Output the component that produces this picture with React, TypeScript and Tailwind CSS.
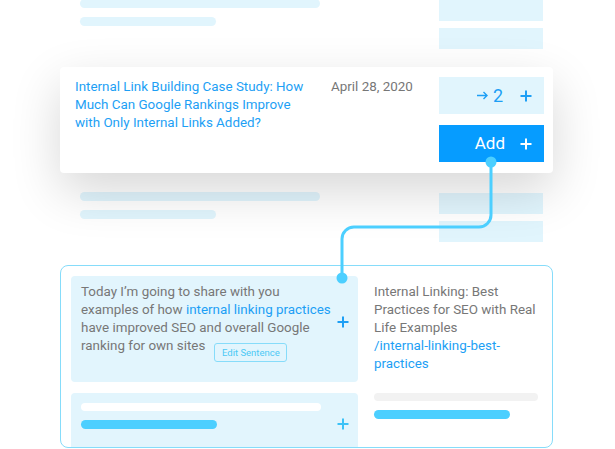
import React from "react";

const Plus = ({ className = "", color = "currentColor" }: { className?: string; color?: string }) => (
  <svg viewBox="0 0 12 12" className={className} fill="none">
    <path d="M6 0.5V11.5M0.5 6H11.5" stroke={color} strokeWidth="2" />
  </svg>
);

const GhostRow = ({ className = "" }: { className?: string }) => (
  <div className={`flex ${className}`}>
    <div className="ml-[80px] flex flex-col">
      <div className="h-[9px] w-[240px] rounded-full bg-[#e1f5fd]" />
      <div className="mt-[9px] h-[9px] w-[136px] rounded-full bg-[#e1f5fd]" />
    </div>
    <div className="ml-[119px] flex flex-col pt-[1px]">
      <div className="h-[21px] w-[104px] bg-[#e1f5fd]" />
      <div className="mt-[7px] h-[21px] w-[104px] bg-[#e1f5fd]" />
    </div>
  </div>
);

export default function App() {
  return (
    <div
      className="relative h-[449px] w-[615px] overflow-hidden bg-white"
      style={{ fontFamily: "Roboto, 'Liberation Sans', sans-serif" }}
    >
      <GhostRow className="h-[50px] -mt-[1px]" />

      {/* Card */}
      <div className="relative z-10 ml-[60px] mt-[18px] flex h-[106px] w-[493px] rounded-[4px] bg-white shadow-[0_18px_50px_rgba(0,0,0,0.16)]">
        <div className="w-[271px] pl-[15px] pt-[11px] text-[13.4px] leading-[18px] text-[#1d9ff5]">
          <div className="whitespace-nowrap">Internal Link Building Case Study: How</div>
          <div className="whitespace-nowrap">Much Can Google Rankings Improve</div>
          <div className="whitespace-nowrap">with Only Internal Links Added?</div>
        </div>
        <div className="w-[108px] pt-[11px] text-[13.4px] leading-[18px] text-[#777777] whitespace-nowrap">
          April 28, 2020
        </div>
        <div className="flex w-[105px] flex-col pt-[10px]">
          <div className="flex h-[37px] items-center justify-end bg-[#e1f5fd] pr-[12px] text-[#1d9ff5]">
            <svg viewBox="0 0 11 9" className="h-[9px] w-[11px]" fill="none">
              <path d="M0 4.5H10M6.5 1L10 4.5L6.5 8" stroke="#1d9ff5" strokeWidth="1.4" />
            </svg>
            <span className="ml-[5px] text-[18px] leading-none">2</span>
            <Plus className="ml-[17px] h-[12px] w-[12px]" color="#1d9ff5" />
          </div>
          <div className="mt-[11px] flex h-[37px] items-center justify-end bg-[#069cff] pr-[12px] text-white">
            <span className="text-[17px] leading-none">Add</span>
            <Plus className="ml-[15px] h-[12px] w-[12px]" color="#ffffff" />
          </div>
        </div>
      </div>

      <GhostRow className="mt-[19px]" />

      {/* Bottom container */}
      <div className="ml-[60px] mt-[23px] h-[183px] w-[493px] overflow-hidden rounded-[8px] border-[1.5px] border-[#86dcfa] bg-white">
        <div className="flex pl-[10px] pt-[10px]">
          <div className="flex w-[287px] flex-col">
            <div className="flex h-[106px] rounded-[4px] bg-[#e2f5fd] pl-[10px] pt-[7px]">
              <div className="w-[256px] text-[13.4px] leading-[18px] text-[#777777]">
                <div className="whitespace-nowrap">Today I’m going to share with you</div>
                <div className="whitespace-nowrap">
                  examples of how <span className="text-[#1d9ff5]">internal linking practices</span>
                </div>
                <div className="whitespace-nowrap">have improved SEO and overall Google</div>
                <div className="whitespace-nowrap">
                  ranking for own sites
                  <span className="ml-[9px] inline-flex h-[19px] w-[73px] items-center justify-center rounded-[3px] border border-[#86dcfa] align-[-6px] text-[9.5px] leading-none text-[#4cc9f5]">
                    Edit Sentence
                  </span>
                </div>
              </div>
              <Plus className="mt-[33px] h-[12px] w-[12px]" color="#1d9ff5" />
            </div>
            <div className="mt-[11px] flex h-[80px] rounded-[4px] bg-[#e2f5fd] pl-[10px] pt-[10px]">
              <div className="flex w-[256px] flex-col">
                <div className="h-[8px] w-[240px] rounded-full bg-white" />
                <div className="mt-[9px] h-[9px] w-[136px] rounded-full bg-[#4ccfff]" />
              </div>
              <Plus className="mt-[15px] h-[12px] w-[12px]" color="#3cc2f7" />
            </div>
          </div>
          <div className="ml-[16px] flex flex-col">
            <div className="pt-[7px] text-[13.4px] leading-[18px] text-[#777777]">
              <div className="whitespace-nowrap">Internal Linking: Best</div>
              <div className="whitespace-nowrap">Practices for SEO with Real</div>
              <div className="whitespace-nowrap">Life Examples</div>
              <div className="whitespace-nowrap text-[#1d9ff5]">/internal-linking-best-</div>
              <div className="whitespace-nowrap text-[#1d9ff5]">practices</div>
            </div>
            <div className="mt-[20px] h-[8px] w-[164px] rounded-full bg-[#f2f2f2]" />
            <div className="mt-[9px] h-[9px] w-[136px] rounded-full bg-[#4ccfff]" />
          </div>
        </div>
      </div>

      {/* Connector */}
      <svg
        className="pointer-events-none absolute left-0 top-0 z-20"
        width="615"
        height="449"
        viewBox="0 0 615 449"
        fill="none"
      >
        <path
          d="M491 162 V215 A12 12 0 0 1 479 227 H354 A12 12 0 0 0 342 239 V278"
          stroke="#4ccfff"
          strokeWidth="3"
        />
        <circle cx="491" cy="162" r="5.5" fill="#4ccfff" />
        <circle cx="342" cy="278" r="5.5" fill="#4ccfff" />
      </svg>
    </div>
  );
}
